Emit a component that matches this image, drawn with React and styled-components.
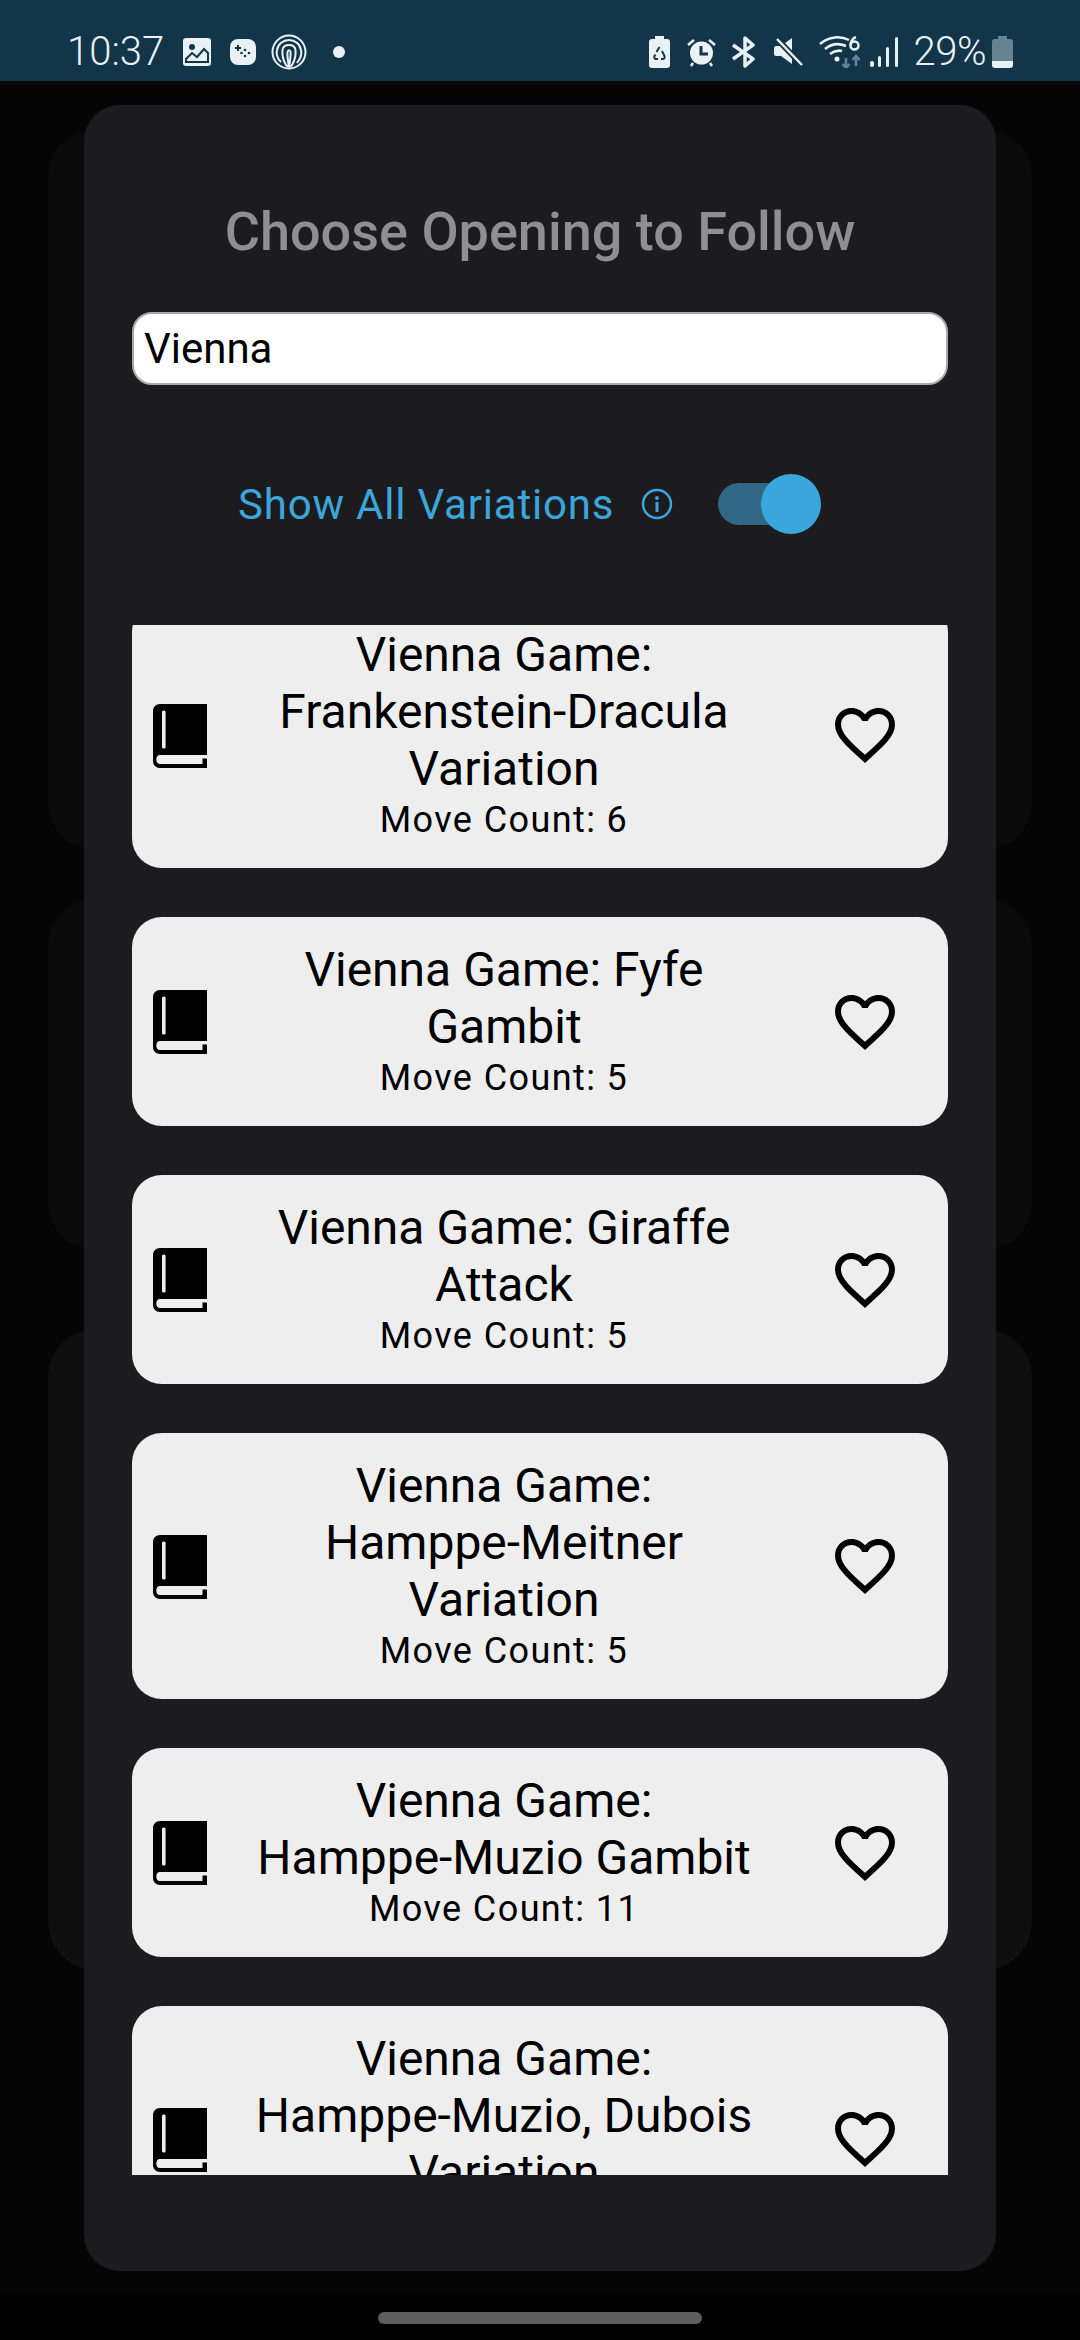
import React from 'react';
import styled, { createGlobalStyle } from 'styled-components';

const Global = createGlobalStyle`
  html, body { margin: 0; padding: 0; background: #000; }
  * { box-sizing: border-box; }
`;

const Screen = styled.div`
  position: relative;
  width: 1080px;
  height: 2340px;
  display: flex;
  flex-direction: column;
  overflow: hidden;
  font-family: Roboto, "Liberation Sans", sans-serif;
  background: #050505;
`;

const StatusBar = styled.header`
  height: 81px;
  flex: none;
  padding: 0 67px;
  background: #133549;
  color: #e9f1f5;
  display: flex;
  align-items: center;
  justify-content: space-between;
`;

const StatusGroup = styled.div`
  display: flex;
  align-items: center;
  height: 81px;
  padding-top: 23px;
`;

const StatusText = styled.span`
  font-size: 40px;
  line-height: 58px;
  font-weight: 300;
  letter-spacing: ${p => p.$ls || 0}px;
  margin-left: ${p => p.$ml || 0}px;
`;

const StatusIcon = styled.svg`
  display: block;
  flex: none;
  margin-left: ${p => p.$ml || 0}px;
`;

const Behind = styled.main`
  flex: 1;
  padding: 48px 48px 0;
  display: flex;
  flex-direction: column;
`;

const BehindCard = styled.div`
  height: ${p => p.$h}px;
  margin-bottom: ${p => p.$mb}px;
  border-radius: 48px;
  background: ${p => p.$bg};
  flex: none;
`;

const NavBar = styled.footer`
  height: 45px;
  flex: none;
  background: #000;
  display: flex;
  justify-content: center;
  padding-top: 17px;
`;

const HomePill = styled.div`
  width: 324px;
  height: 12px;
  border-radius: 6px;
  background: #5e5e5e;
`;

const Modal = styled.section`
  position: absolute;
  left: 84px;
  top: 105px;
  width: 912px;
  height: 2166px;
  border-radius: 36px;
  background: #1c1c1e;
  padding: 96px 48px 0;
  display: flex;
  flex-direction: column;
`;

const Title = styled.h1`
  margin: 0;
  font-size: 54px;
  line-height: 62px;
  font-weight: 500;
  color: #8e8e93;
  text-align: center;
`;

const SearchBox = styled.div`
  margin-top: 49px;
  height: 73px;
  border: 2px solid #a9a9a9;
  border-radius: 20px;
  background: #fff;
  display: flex;
  align-items: center;
  padding: 0 10px;
  font-size: 42px;
  color: #000;
`;

const ToggleRow = styled.div`
  margin-top: 89px;
  height: 60px;
  padding-left: 106px;
  display: flex;
  align-items: center;
`;

const ToggleLabel = styled.span`
  font-size: 42px;
  color: #3ba6dc;
  letter-spacing: 0.8px;
`;

const InfoIcon = styled.svg`
  display: block;
  margin-left: 27px;
`;

const Switch = styled.div`
  position: relative;
  margin-left: 45px;
  width: 82px;
  height: 42px;
  border-radius: 21px;
  background: #2f6784;
`;

const Thumb = styled.div`
  position: absolute;
  right: -21px;
  top: -9px;
  width: 60px;
  height: 60px;
  border-radius: 50%;
  background: #3ba6dc;
`;

const List = styled.div`
  margin-top: 91px;
  height: 1550px;
  overflow: hidden;
`;

const ListInner = styled.div`
  margin-top: -23px;
  display: flex;
  flex-direction: column;
  gap: 49px;
`;

const Row = styled.article`
  flex: none;
  display: grid;
  grid-template-columns: 96px 552px 168px;
  align-items: center;
  padding: 24px 0 25px;
  border-radius: 30px;
  background: #eeeeee;
  color: #000;
`;

const BookCell = styled.div`
  display: flex;
  justify-content: center;
  padding-top: 2px;
`;

const HeartCell = styled.div`
  display: flex;
  justify-content: center;
  padding-top: 2px;
  padding-left: 2px;
`;

const TextCell = styled.div`
  text-align: center;
`;

const TitleLine = styled.div`
  font-size: 48px;
  line-height: 57px;
`;

const MoveCount = styled.div`
  font-size: 36px;
  line-height: 46px;
  letter-spacing: 1.4px;
`;

const Book = () => (
  <svg width="54" height="64" viewBox="0 0 54 64">
    <path fill="#000" d="M7 0H54V64H7C3 64 0 61 0 57V7C0 3 3 0 7 0Z" />
    <rect x="9" y="6.500" width="3.600" height="38" rx="1.500" fill="#eee" />
    <path fill="#eee" d="M7 51H54V54.500H49.500V60H7C4.500 60 3.300 58 3.300 55.500C3.300 53 4.500 51 7 51Z" />
  </svg>
);

const Heart = () => (
  <svg width="60" height="55" viewBox="2 3 20 18.35">
    <path fill="#000" d="M16.5 3c-1.74 0-3.41.81-4.5 2.09C10.91 3.81 9.24 3 7.5 3 4.42 3 2 5.42 2 8.5c0 3.78 3.4 6.86 8.55 11.54L12 21.35l1.45-1.32C18.6 15.36 22 12.28 22 8.5 22 5.42 19.58 3 16.5 3zm-4.4 15.55l-.1.1-.1-.1C7.14 14.24 4 11.39 4 8.5 4 6.5 5.5 5 7.5 5c1.54 0 3.04.99 3.57 2.36h1.87C13.46 5.99 14.96 5 16.5 5c2 0 3.5 1.5 3.5 3.5 0 2.89-3.14 5.74-7.9 10.05z" />
  </svg>
);

const rows = [
  { lines: ['Vienna Game:', 'Frankenstein-Dracula', 'Variation'], moves: 6 },
  { lines: ['Vienna Game: Fyfe', 'Gambit'], moves: 5 },
  { lines: ['Vienna Game: Giraffe', 'Attack'], moves: 5 },
  { lines: ['Vienna Game:', 'Hamppe-Meitner', 'Variation'], moves: 5 },
  { lines: ['Vienna Game:', 'Hamppe-Muzio Gambit'], moves: 11 },
  { lines: ['Vienna Game:', 'Hamppe-Muzio, Dubois', 'Variation'], moves: 5 },
];

export default function App() {
  const c = '#e9f1f5';
  const bg = '#133549';
  return (
    <Screen>
      <Global />
      <StatusBar>
        <StatusGroup>
          <StatusText>10:37</StatusText>
          <StatusIcon $ml={19} width="28" height="28" viewBox="0 0 28 28">
            <rect width="28" height="28" rx="3" fill={c} />
            <circle cx="9" cy="9" r="3" fill={bg} />
            <path d="M3 24L3 21L9 15L14 19L21 11L25 15V24Z" fill="none" stroke={bg} strokeWidth="2" />
          </StatusIcon>
          <StatusIcon $ml={19} width="26" height="26" viewBox="0 0 26 26">
            <rect width="26" height="26" rx="8" fill={c} />
            <path d="M8 6V12M5 9H11" stroke={bg} strokeWidth="2" />
            <circle cx="15" cy="11" r="1.300" fill={bg} />
            <circle cx="19" cy="14" r="1.300" fill={bg} />
            <circle cx="15" cy="17" r="1.300" fill={bg} />
            <circle cx="11.500" cy="14" r="1.300" fill={bg} />
          </StatusIcon>
          <StatusIcon $ml={15} width="36" height="36" viewBox="0 0 36 36" fill="none" stroke={c} strokeWidth="2">
            <circle cx="18" cy="18" r="16.500" />
            <path d="M10 28C6 24 5 20 6 16C7 10 12 6 18 6C24 6 29 10 30 16C31 20 30 24 26 29" />
            <path d="M15 31C12 26 11 21 11.500 16C12 12 15 11 18 11C21 11 24 12 24.500 16C25 21 24 26 21 31C20 33 16 33 15 31Z" />
            <path d="M18 33C17 27 16 22 16.500 18C17 15.500 19 15.500 19.500 18C20 22 19 27 18 33Z" />
          </StatusIcon>
          <StatusIcon $ml={26} width="12" height="12" viewBox="0 0 12 12">
            <circle cx="6" cy="6" r="6" fill={c} />
          </StatusIcon>
        </StatusGroup>
        <StatusGroup>
          <StatusIcon width="21" height="32" viewBox="0 0 21 32">
            <path fill={c} d="M6 0H15V3H18C20 3 21 4 21 6V29C21 31 20 32 18 32H3C1 32 0 31 0 29V6C0 4 1 3 3 3H6Z" />
            <path fill="none" stroke={bg} strokeWidth="2" d="M10.500 11L7.500 16M13 15L15.500 20C16 22 15 23 14 23H12M9 23H7C5.500 23 5 22 5.500 20L6.500 18.500" />
          </StatusIcon>
          <StatusIcon $ml={17} width="29" height="29" viewBox="0 0 29 29">
            <circle cx="14.500" cy="15" r="11.500" fill={c} />
            <path d="M14 8V16H21" stroke={bg} strokeWidth="3" fill="none" />
            <path d="M1 7L7 2M28 7L22 2M6 25L4 28M23 25L25 28" stroke={c} strokeWidth="2.500" />
          </StatusIcon>
          <StatusIcon $ml={15} width="28" height="32" viewBox="0 0 28 32" fill="none" stroke={c} strokeWidth="3.500" strokeLinejoin="round">
            <path d="M2 9L22 23L14 30V2L22 9L2 23" />
          </StatusIcon>
          <StatusIcon $ml={15} width="29" height="28" viewBox="0 0 29 28">
            <path fill={c} d="M0 10C0 9 1 8 2 8H7L18 0V26L7 18H2C1 18 0 17 0 16Z" />
            <path d="M3 1L28 27" stroke={bg} strokeWidth="6" />
            <path d="M3 1L28 27" stroke={c} strokeWidth="2.500" />
          </StatusIcon>
          <StatusIcon $ml={16} width="42" height="32" viewBox="0 0 42 32" fill="none">
            <path d="M1 8C10 0 22 0 30 4" stroke={c} strokeWidth="2.500" />
            <path d="M6 13C12 8 20 7 27 10" stroke={c} strokeWidth="2.500" />
            <path d="M11 18C15 15 19 14 23 15" stroke={c} strokeWidth="2.500" />
            <circle cx="18" cy="23" r="2.500" fill={c} />
            <path d="M27 22V32M23.500 28L27 32L30.500 28" stroke="#668394" strokeWidth="2.500" />
            <path d="M37 30V20M33.500 24L37 20L40.500 24" stroke="#668394" strokeWidth="2.500" />
            <circle cx="35.500" cy="9.500" r="4" stroke={c} strokeWidth="2.500" />
            <path d="M31.500 9C32 5 34 2 37 1" stroke={c} strokeWidth="2.500" />
          </StatusIcon>
          <StatusIcon $ml={9} width="28" height="30" viewBox="0 0 28 30">
            <rect x="0" y="24" width="4" height="6" rx="2" fill={c} />
            <rect x="8" y="19" width="3" height="11" rx="1.500" fill={c} />
            <rect x="16" y="10" width="3" height="20" rx="1.500" fill={c} />
            <rect x="25" y="0" width="3" height="30" rx="1.500" fill={c} />
          </StatusIcon>
          <StatusText $ml={16} $ls={-0.5}>29%</StatusText>
          <StatusIcon $ml={6} width="21" height="32" viewBox="0 0 21 32">
            <path fill="#668394" d="M6 0H15V3H18C20 3 21 4 21 6V25H0V6C0 4 1 3 3 3H6Z" />
            <path fill={c} d="M0 25H21V29C21 31 20 32 18 32H3C1 32 0 31 0 29Z" />
          </StatusIcon>
        </StatusGroup>
      </StatusBar>

      <Behind>
        <BehindCard $h={721} $mb={48} $bg="#0a0a0a" />
        <BehindCard $h={352} $mb={79} $bg="#0a0a0a" />
        <BehindCard $h={641} $mb={0} $bg="#0f0f0f" />
      </Behind>

      <NavBar><HomePill /></NavBar>

      <Modal>
        <Title>Choose Opening to Follow</Title>
        <SearchBox>Vienna</SearchBox>
        <ToggleRow>
          <ToggleLabel>Show All Variations</ToggleLabel>
          <InfoIcon width="32" height="32" viewBox="0 0 32 32" fill="none">
            <circle cx="16" cy="16" r="14" stroke="#3ba6dc" strokeWidth="2.500" />
            <rect x="14.500" y="14" width="3" height="10" fill="#3ba6dc" />
            <circle cx="16" cy="10" r="1.900" fill="#3ba6dc" />
          </InfoIcon>
          <Switch><Thumb /></Switch>
        </ToggleRow>
        <List>
          <ListInner>
            {rows.map((r, i) => (
              <Row key={i}>
                <BookCell><Book /></BookCell>
                <TextCell>
                  {r.lines.map(l => <TitleLine key={l}>{l}</TitleLine>)}
                  <MoveCount>Move Count: {r.moves}</MoveCount>
                </TextCell>
                <HeartCell><Heart /></HeartCell>
              </Row>
            ))}
          </ListInner>
        </List>
      </Modal>
    </Screen>
  );
}
